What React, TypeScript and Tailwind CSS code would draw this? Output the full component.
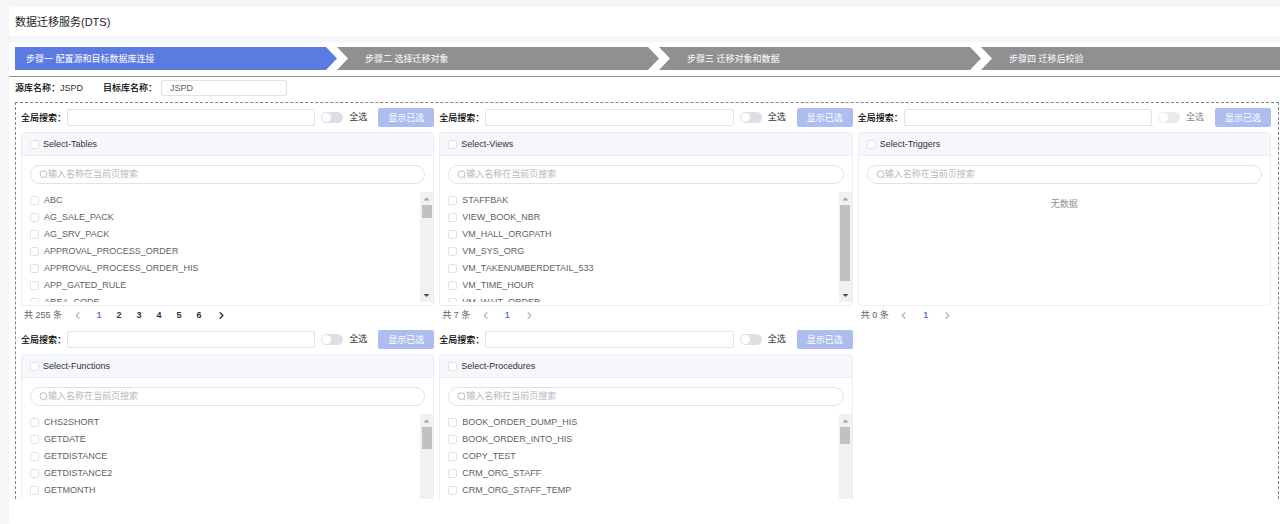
import { useId } from "react";
import clsx from "clsx";
import { ChevronLeft, ChevronRight } from "lucide-react";

type PanelData = {
  title: string;
  items: string[];
  total?: number;
  pages?: number;
  thumb?: string;
};

const steps = ["步骤一 配置源和目标数据库连接", "步骤二 选择迁移对象", "步骤三 迁移对象和数据", "步骤四 迁移后校验"];

const panels: PanelData[] = [
  {
    title: "Select-Tables",
    items: [
      "ABC",
      "AG_SALE_PACK",
      "AG_SRV_PACK",
      "APPROVAL_PROCESS_ORDER",
      "APPROVAL_PROCESS_ORDER_HIS",
      "APP_GATED_RULE",
      "AREA_CODE",
    ],
    total: 255,
    pages: 6,
    thumb: "h-[13px]",
  },
  {
    title: "Select-Views",
    items: [
      "STAFFBAK",
      "VIEW_BOOK_NBR",
      "VM_HALL_ORGPATH",
      "VM_SYS_ORG",
      "VM_TAKENUMBERDETAIL_533",
      "VM_TIME_HOUR",
      "VM_WAIT_ORDER",
    ],
    total: 7,
    pages: 1,
    thumb: "h-[76px]",
  },
  { title: "Select-Triggers", items: [], total: 0, pages: 1 },
  {
    title: "Select-Functions",
    items: ["CHS2SHORT", "GETDATE", "GETDISTANCE", "GETDISTANCE2", "GETMONTH"],
    thumb: "h-[22px]",
  },
  {
    title: "Select-Procedures",
    items: ["BOOK_ORDER_DUMP_HIS", "BOOK_ORDER_INTO_HIS", "COPY_TEST", "CRM_ORG_STAFF", "CRM_ORG_STAFF_TEMP"],
    thumb: "h-[17px]",
  },
];

function Check() {
  return (
    <input
      type="checkbox"
      className="size-[9px] shrink-0 appearance-none rounded-[2px] border border-[#dfe2e8] bg-white checked:border-[#5c7be0] checked:bg-[#5c7be0]"
    />
  );
}

function SearchIcon() {
  return (
    <svg viewBox="0 0 10 10" className="size-[9px] shrink-0" fill="none" stroke="#b4b8c0" strokeWidth="1">
      <circle cx="5" cy="4.6" r="3.8" />
      <path d="M7.7 7.3 9.5 9.3" />
    </svg>
  );
}

function Scrollbar({ thumb }: { thumb: string }) {
  return (
    <div aria-hidden="true" className="flex w-[13px] shrink-0 flex-col items-center bg-[#f1f1f1]">
      <svg viewBox="0 0 13 13" className="size-[13px] shrink-0" fill="#a3a3a3">
        <path d="M3.5 8.5h6l-3-3z" />
      </svg>
      <div className={clsx("w-[10px] shrink-0 bg-[#c1c1c1]", thumb)} />
      <svg viewBox="0 0 13 13" className="mt-auto size-[13px] shrink-0" fill="#505050">
        <path d="M3.5 5h6l-3 3z" />
      </svg>
    </div>
  );
}

function Pagination({ total, pages }: { total: number; pages: number }) {
  return (
    <nav className="mb-1.5 flex h-[18px] items-center pl-[3px] text-[#606266]">
      <span className="mr-[3px]">共 {total} 条</span>
      <button type="button" aria-label="上一页" className="flex w-6 justify-center text-[#b4b8c0]">
        <ChevronLeft size={11} strokeWidth={3} />
      </button>
      {Array.from({ length: pages }, (_, i) => (
        <button
          key={i}
          type="button"
          className={clsx("w-5 text-center font-bold", i === 0 ? "text-[#5c7be0]" : "text-[#303133]")}
        >
          {i + 1}
        </button>
      ))}
      <button
        type="button"
        aria-label="下一页"
        className={clsx("flex w-6 justify-center", pages > 1 ? "text-[#303133]" : "text-[#b4b8c0]")}
      >
        <ChevronRight size={11} strokeWidth={3} />
      </button>
    </nav>
  );
}

function TransferPanel({ title, items, total, pages, thumb }: PanelData) {
  const id = useId();
  const empty = items.length === 0;
  return (
    <section className="min-w-0">
      <div className="flex h-[19px] items-center">
        <label htmlFor={id} className="w-[46px] shrink-0 whitespace-nowrap pt-px font-medium text-black">
          全局搜索：
        </label>
        <input
          id={id}
          type="text"
          className="h-[17px] min-w-0 flex-1 rounded-[2px] border border-[#dfe2e8] bg-white px-2 outline-none"
        />
        <label className={clsx("ml-1.5 flex items-center gap-1.5 text-[#303133]", empty && "opacity-60")}>
          <input
            type="checkbox"
            role="switch"
            disabled={empty}
            className="flex h-[11px] w-[22px] appearance-none items-center rounded-full bg-[#dcdfe6] px-px before:size-[9px] before:rounded-full before:bg-white checked:justify-end checked:bg-[#5c7be0]"
          />
          全选
        </label>
        <button type="button" className="ml-[11px] h-[19px] w-14 shrink-0 rounded-[2px] bg-[#aebdf0] pt-px text-white">
          显示已选
        </button>
      </div>

      <div className="mt-[5px] overflow-hidden rounded-[3px] border border-[#ebeef5]">
        <label className="flex h-[23px] items-center gap-1 border-b border-[#ebeef5] bg-[#f5f7fa] px-2 text-[#303133]">
          <Check />
          {title}
        </label>
        <label className="mx-2 mt-[9px] flex h-[19px] items-center rounded-full border border-[#dfe2e8] px-2">
          <SearchIcon />
          <input
            type="text"
            aria-label="输入名称在当前页搜索"
            placeholder="输入名称在当前页搜索"
            className="min-w-0 flex-1 bg-transparent outline-none placeholder:text-[#b4b8c0]"
          />
        </label>
        <div className="mt-2 mb-[3px] flex h-[110px] overflow-hidden">
          {empty ? (
            <p className="flex-1 pt-1.5 text-center text-[#909399]">无数据</p>
          ) : (
            <ul className="min-w-0 flex-1 px-2">
              {items.map((item) => (
                <li key={item}>
                  <label className="flex h-[17px] items-center gap-[5px] text-[#606266]">
                    <Check />
                    {item}
                  </label>
                </li>
              ))}
            </ul>
          )}
          {thumb && <Scrollbar thumb={thumb} />}
        </div>
      </div>
      {total !== undefined && pages !== undefined && <Pagination total={total} pages={pages} />}
    </section>
  );
}

export default function App() {
  return (
    <div className="flex h-screen flex-col overflow-hidden bg-[#f4f6f8] pt-[7px] pl-[9px] font-['Liberation_Sans','Noto_Sans_CJK_SC',sans-serif] text-[9px] leading-[13px]">
      <header className="flex h-[29px] shrink-0 items-center rounded-l-[2px] bg-white px-1.5">
        <h1 className="text-[11px] leading-4 text-[#1f2023]">数据迁移服务(DTS)</h1>
      </header>

      <main className="mt-1.5 flex min-h-0 flex-1 flex-col rounded-l-[2px] bg-white pb-[25px]">
        <div className="shrink-0 overflow-hidden border-b border-[#909092] pt-[5px] pb-1.5 pl-1.5">
          <ol className="-mr-[23px] grid grid-cols-4">
            {steps.map((step, i) => (
              <li
                key={step}
                className={clsx(
                  "-mr-px flex h-[23px] items-center pt-0.5 text-white",
                  i === 0
                    ? "bg-[#5c7be0] pl-[11px] [clip-path:polygon(0_0,calc(100%-12px)_0,calc(100%-1px)_50%,calc(100%-12px)_100%,0_100%)]"
                    : "bg-[#909092] pl-7 [clip-path:polygon(0_0,calc(100%-12px)_0,calc(100%-1px)_50%,calc(100%-12px)_100%,0_100%,11px_50%)]",
                )}
              >
                {step}
              </li>
            ))}
          </ol>
        </div>

        <div className="flex shrink-0 items-center pt-[3px] pb-1.5 pl-1.5 text-[#303133]">
          <span className="font-medium text-black">源库名称：</span>
          <span>JSPD</span>
          <label htmlFor="target" className="ml-5 font-medium text-black">
            目标库名称：
          </label>
          <input
            id="target"
            type="text"
            defaultValue="JSPD"
            className="ml-1 h-4 w-[126px] rounded-[2px] border border-[#dfe2e8] px-2 text-[#606266] outline-none"
          />
        </div>

        <div className="mr-px ml-1.5 min-h-0 flex-1 overflow-hidden border border-b-0 border-dashed border-[#80828c] pt-[5px] pr-[7px] pl-[5px]">
          <div className="grid grid-cols-3 gap-x-[5px]">
            {panels.map((panel) => (
              <TransferPanel key={panel.title} {...panel} />
            ))}
          </div>
        </div>
      </main>
    </div>
  );
}
